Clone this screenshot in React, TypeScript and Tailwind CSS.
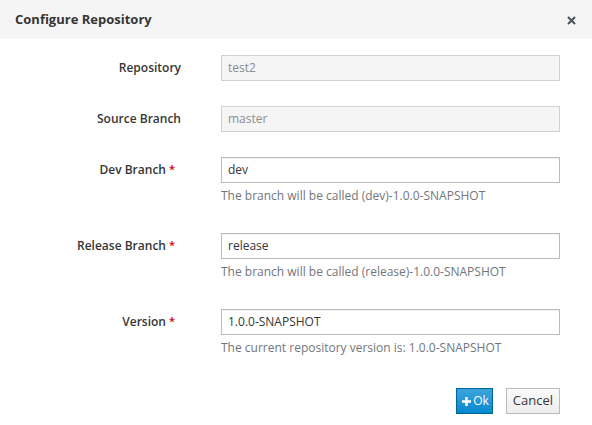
import React from "react";

function Req() {
  return <span className="ml-[3px] text-[11px] text-[#cc0000] relative -top-[1px]">*</span>;
}

function Row({
  label,
  value,
  disabled,
  required,
  help,
}: {
  label: string;
  value: string;
  disabled?: boolean;
  required?: boolean;
  help?: string;
}) {
  return (
    <div className="flex mb-[25px]">
      <div className={`w-[181px] h-[26px] flex items-center justify-end font-semibold text-[12px] text-[#363636] ${required ? "pr-[6px]" : ""}`}>
        {label}
        {required && <Req />}
      </div>
      <div className="ml-[40px] w-[339px]">
        <div
          className={`h-[26px] flex items-center px-[6px] text-[12px] border ${
            disabled
              ? "bg-[#f5f5f5] border-[#d1d1d1] text-[#8b8d8f]"
              : "bg-white border-[#bbbbbb] text-[#363636] shadow-[inset_0_1px_1px_rgba(3,3,3,0.06)]"
          }`}
        >
          {value}
        </div>
        {help && (
          <div className="mt-[5px] mb-[4px] leading-[16px] text-[12px] text-[#72767b]">{help}</div>
        )}
      </div>
    </div>
  );
}

export default function App() {
  return (
    <div className="w-[592px] h-[425px] bg-white" style={{ fontFamily: '"Open Sans", "Liberation Sans", sans-serif' }}>
      <div className="h-[39px] bg-[#f5f5f5] flex items-center justify-between pl-[15px] pr-[16px]">
        <div className="text-[13px] font-bold text-[#363636]">Configure Repository</div>
        <svg width="9" height="9" viewBox="0 0 9 9" className="mt-[1px]">
          <path d="M1 1 L8 8 M8 1 L1 8" stroke="#4d5258" strokeWidth="2" />
        </svg>
      </div>
      <div className="pt-[16px] flex flex-col">
        <Row label="Repository" value="test2" disabled />
        <Row label="Source Branch" value="master" disabled />
        <Row label="Dev Branch" value="dev" required help="The branch will be called (dev)-1.0.0-SNAPSHOT" />
        <Row label="Release Branch" value="release" required help="The branch will be called (release)-1.0.0-SNAPSHOT" />
        <Row label="Version" value="1.0.0-SNAPSHOT" required help="The current repository version is: 1.0.0-SNAPSHOT" />
        <div className="flex justify-end pr-[32px] mt-[3px] gap-[13px]">
          <button className="h-[26px] pl-[5px] pr-[3px] flex items-center gap-[2px] text-[12px] text-white border border-[#00659c] bg-gradient-to-b from-[#39a5dc] to-[#0088ce]">
            <svg width="9" height="9" viewBox="0 0 9 9">
              <path d="M4.5 0 V9 M0 4.5 H9" stroke="white" strokeWidth="2.4" />
            </svg>
            Ok
          </button>
          <button className="h-[26px] px-[6px] flex items-center text-[13px] text-[#363636] border border-[#bbbbbb] bg-gradient-to-b from-[#fafafa] to-[#ededed]">
            Cancel
          </button>
        </div>
      </div>
    </div>
  );
}
